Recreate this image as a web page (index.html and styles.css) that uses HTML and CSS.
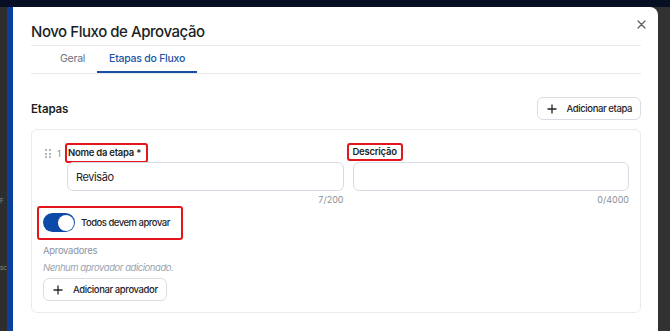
FILE: index.html
```html
<!DOCTYPE html>
<html lang="pt">
<head>
<meta charset="utf-8">
<link rel="stylesheet" href="styles.css">
</head>
<body>
<div class="topbar"></div>
<div class="stage">
  <div class="backdrop-left">
    <span class="bg-frag f1">F</span>
    <span class="bg-frag f2">sc</span>
  </div>
  <div class="blue-strip"></div>
  <div class="modal">
    <button class="close" aria-label="Fechar">
      <svg width="9" height="9" viewBox="0 0 9 9"><path d="M1 1L8 8M8 1L1 8" stroke="#555b62" stroke-width="1.2" stroke-linecap="round"/></svg>
    </button>
    <div class="modal-header">
      <h1 class="title">Novo Fluxo de Aprovação</h1>
    </div>
    <div class="tabs">
      <div class="tab">Geral</div>
      <div class="tab active">Etapas do Fluxo</div>
    </div>
    <div class="section-head">
      <h2 class="section-title">Etapas</h2>
      <button class="btn">
        <svg class="plus" width="10" height="10" viewBox="0 0 10 10"><path d="M5 0.5V9.5M0.5 5H9.5" stroke="#1f2328" stroke-width="1.3"/></svg>
        <span>Adicionar etapa</span>
      </button>
    </div>
    <div class="card">
      <div class="step-row">
        <div class="handle">
          <div class="dots"><i></i><i></i><i></i><i></i><i></i><i></i></div>
          <span class="num">1</span>
        </div>
        <div class="fields">
          <div class="field">
            <label class="label mark-a">Nome da etapa *</label>
            <div class="input">Revisão</div>
            <div class="counter">7/200</div>
          </div>
          <div class="field">
            <label class="label mark-b">Descrição</label>
            <div class="input"></div>
            <div class="counter">0/4000</div>
          </div>
        </div>
      </div>
      <div class="toggle-row mark-c">
        <span class="switch"><span class="knob"></span></span>
        <span class="toggle-label">Todos devem aprovar</span>
      </div>
      <div class="sub-label">Aprovadores</div>
      <div class="empty">Nenhum aprovador adicionado.</div>
      <button class="btn">
        <svg class="plus" width="10" height="10" viewBox="0 0 10 10"><path d="M5 0.5V9.5M0.5 5H9.5" stroke="#1f2328" stroke-width="1.3"/></svg>
        <span>Adicionar aprovador</span>
      </button>
    </div>
  </div>
  <div class="backdrop-right"></div>
</div>
</body>
</html>
```

FILE: styles.css
```css
* { box-sizing: border-box; }
html, body { margin: 0; padding: 0; }
body {
  width: 670px;
  height: 331px;
  overflow: hidden;
  background: #2f2f2f;
  font-family: Inter, "Noto Sans", sans-serif;
  color: #1f2328;
}
.topbar { height: 7px; background: #070f24; }
.stage { display: flex; height: 324px; }
.backdrop-left {
  width: 7px;
  background: #2e2e2e;
  overflow: hidden;
  display: flex;
  flex-direction: column;
  font-size: 6px;
  color: #8f8f8f;
}
.bg-frag { display: block; line-height: 7px; white-space: nowrap; }
.f1 { margin-top: 190px; }
.f2 { margin-top: 60px; }
.blue-strip { width: 6px; background: #0b3f9e; }
.modal {
  position: relative;
  width: 645px;
  background: #ffffff;
  border-top-right-radius: 8px;
  padding: 0 17px 0 18px;
}
.backdrop-right { flex: 1; background: #323232; }
.close {
  position: absolute;
  top: 13px;
  right: 12px;
  width: 9px;
  height: 9px;
  padding: 0;
  border: 0;
  background: none;
  display: flex;
}
.modal-header {
  padding: 15px 0 3px;
  border-bottom: 1px solid #e7e9ec;
}
.title {
  margin: 0;
  font-size: 15px;
  line-height: 20px;
  font-weight: 500;
  color: #1b1f24;
  letter-spacing: -0.45px;
}
.tabs {
  display: flex;
  padding-left: 17px;
  border-bottom: 1px solid #e7e9ec;
}
.tab {
  padding: 6px 12px 5px;
  font-size: 10.5px;
  line-height: 14px;
  letter-spacing: -0.25px;
  color: #6b7280;
  border-bottom: 2px solid transparent;
}
.tab.active {
  color: #1b55a6;
  border-bottom-color: #174ea3;
  font-weight: 500;
}
.section-head {
  margin-top: 23px;
  display: flex;
  align-items: center;
  justify-content: space-between;
}
.section-title {
  margin: 0;
  font-size: 11.5px;
  line-height: 16px;
  font-weight: 600;
  letter-spacing: -0.1px;
  color: #1b1f24;
  padding-top: 1px;
}
.btn {
  display: inline-flex;
  align-items: center;
  gap: 10px;
  height: 23px;
  padding: 0 8px 0 9px;
  border: 1px solid #d9dee4;
  border-radius: 6px;
  background: #fff;
  font-family: inherit;
  font-size: 9.5px;
  letter-spacing: -0.4px;
  font-weight: 500;
  color: #1f2328;
}
.plus { flex: none; }
.card {
  margin-top: 9px;
  border: 1px solid #e8ecf0;
  border-radius: 6px;
  padding: 13px 11px 11px;
  display: flex;
  flex-direction: column;
  align-items: flex-start;
}
.step-row { display: flex; width: 100%; }
.handle {
  width: 24px;
  flex: none;
  display: flex;
  align-items: flex-start;
  padding-top: 6px;
  padding-left: 2px;
}
.dots {
  display: grid;
  grid-template-columns: 2px 2px;
  grid-auto-rows: 2px;
  column-gap: 2px;
  row-gap: 1.5px;
}
.dots i { width: 2px; height: 2px; background: #9aa0a6; border-radius: 1px; }
.num {
  margin-left: 6px;
  font-size: 9.5px;
  line-height: 9px;
  color: #8a8f96;
}
.fields {
  flex: 1;
  display: grid;
  grid-template-columns: 1fr 1fr;
  column-gap: 9px;
}
.field { display: flex; flex-direction: column; align-items: flex-start; }
.label {
  font-size: 9.5px;
  line-height: 12px;
  font-weight: 600;
  letter-spacing: -0.25px;
  color: #1b1f24;
  border: 2px solid #e5151c;
  border-radius: 3px;
}
.mark-a { margin: 0 0 -1px -2px; padding: 2px 5px 2px 1px; }
.mark-b { margin: 0 0 1px -6px; padding: 1px 4px; }
.input {
  width: 100%;
  height: 29px;
  border: 1px solid #d6dce3;
  border-radius: 6px;
  padding: 0 8px;
  display: flex;
  align-items: center;
  font-size: 11px;
  letter-spacing: -0.4px;
  color: #1f2328;
}
.counter {
  align-self: flex-end;
  margin-top: 3px;
  font-size: 9px;
  line-height: 12px;
  color: #8b9199;
}
.toggle-row {
  display: flex;
  align-items: center;
  gap: 6px;
  border: 2px solid #e5151c;
  border-radius: 3px;
  padding: 5px 11px 6px 4px;
  margin-left: -6px;
  margin-bottom: 4px;
}
.switch {
  width: 32px;
  height: 19px;
  border-radius: 10px;
  background: #0b4aa6;
  display: flex;
  align-items: center;
  justify-content: flex-end;
  padding: 0 1.5px;
}
.knob {
  width: 16px;
  height: 16px;
  border-radius: 50%;
  background: #fff;
}
.toggle-label {
  font-size: 9.5px;
  line-height: 14px;
  font-weight: 500;
  letter-spacing: -0.5px;
  color: #1f2328;
}
.sub-label {
  font-size: 9.5px;
  line-height: 14px;
  letter-spacing: -0.3px;
  color: #8a94a3;
}
.empty {
  margin-top: 3px;
  margin-bottom: 3px;
  font-size: 9.5px;
  line-height: 14px;
  letter-spacing: -0.45px;
  font-style: italic;
  color: #9aa3af;
}
```
